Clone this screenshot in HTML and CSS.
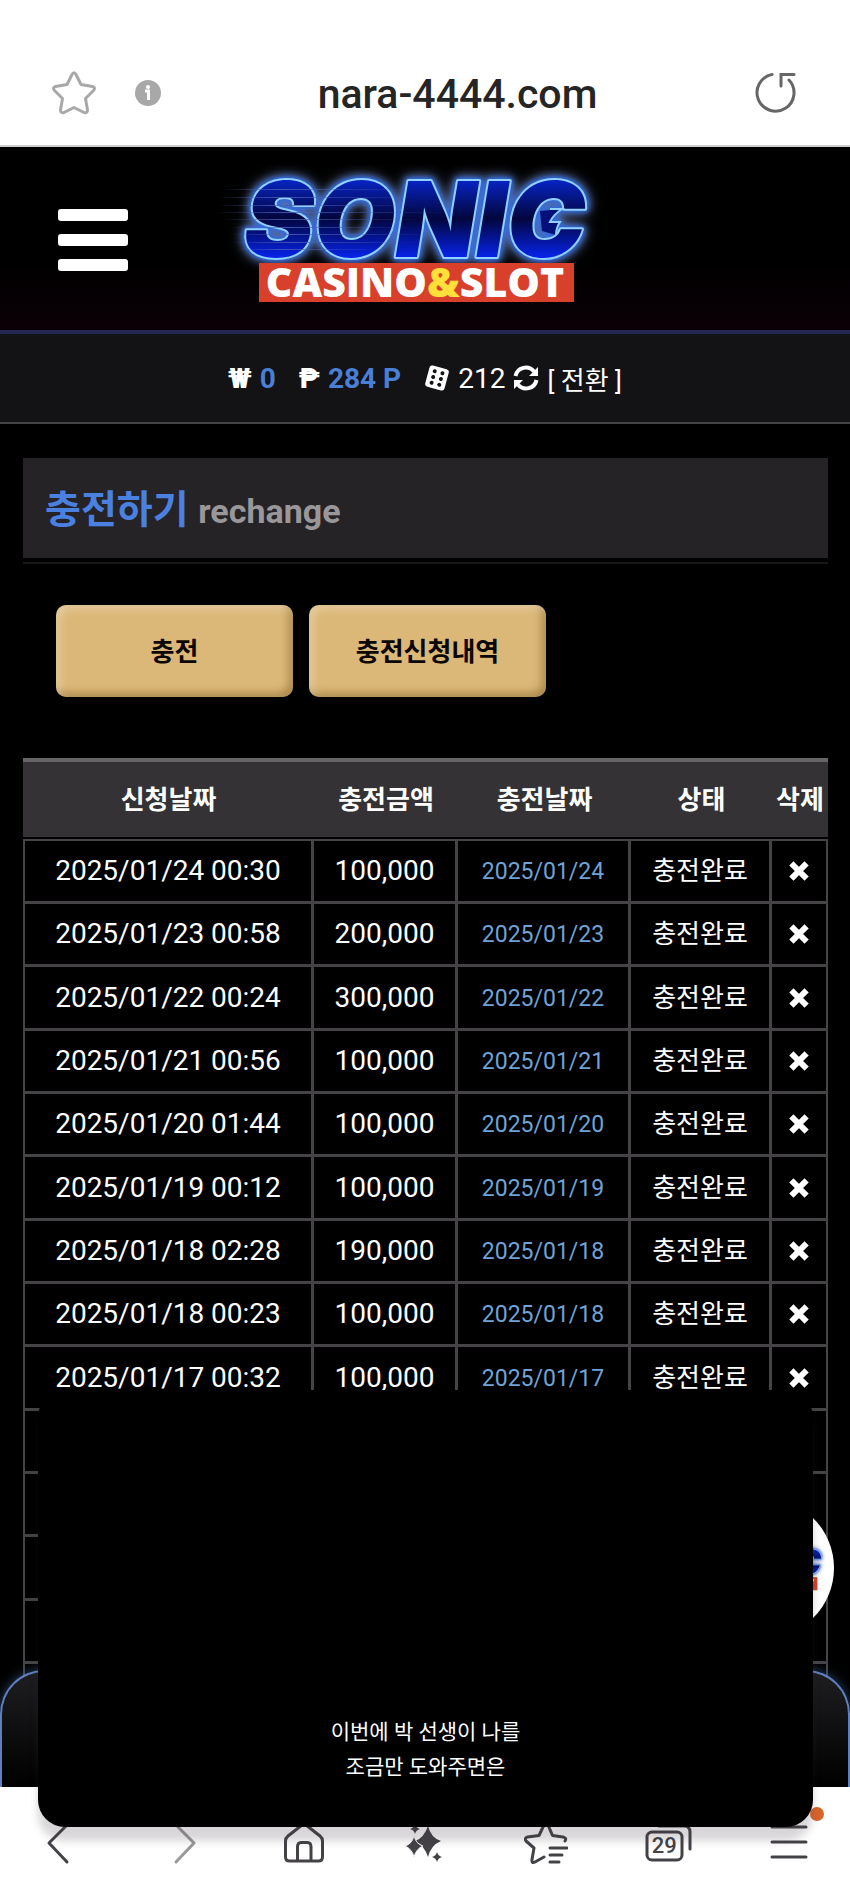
FILE: index.html
```html
<!DOCTYPE html>
<html lang="ko">
<head>
  <meta charset="UTF-8">
  <meta name="viewport" content="width=device-width, initial-scale=1.0">
  <title>충전하기</title>
  <link rel="stylesheet" href="styles.css">
</head>
<body>

  <!-- shared symbols -->
  <svg class="defs" width="0" height="0" aria-hidden="true">
    <defs>
      <linearGradient id="neon" x1="0" y1="0" x2="0" y2="1">
        <stop offset="0.1" stop-color="#0a2df0"/>
        <stop offset="0.5" stop-color="#02063c"/>
        <stop offset="0.8" stop-color="#0722e6"/>
      </linearGradient>
      <linearGradient id="speed" x1="0" y1="0" x2="1" y2="0">
        <stop offset="0" stop-color="#4a62b8" stop-opacity="0"/>
        <stop offset="0.3" stop-color="#4a62b8" stop-opacity="0.8"/>
        <stop offset="1" stop-color="#4a62b8" stop-opacity="0"/>
      </linearGradient>
    </defs>
    <symbol id="times" viewBox="0 0 20 20">
      <path d="M4.500 4.500 15.500 15.500M15.500 4.500 4.500 15.500" stroke="#fff" stroke-width="6" stroke-linecap="square" stroke-linejoin="round"/>
    </symbol>
  </svg>

  <div class="address-bar">
    <button class="icon-btn" aria-label="즐겨찾기">
      <svg width="48" height="48" viewBox="0 0 48 48" fill="none" stroke="#a8a8a8" stroke-width="3" stroke-linejoin="round">
        <path d="M22 5.500Q24 2 26 5.500L31 15.500 42.500 17.500Q46 18.500 43.500 21.500L35.500 29.500 37.500 41Q37.500 44.500 34 43.500L24 38.500 14 43.500Q10.500 44.500 10.500 41L12.500 29.500 4.500 21.500Q2 18.500 5.500 17.500L17 15.500Z"/>
      </svg>
    </button>
    <button class="icon-btn" aria-label="사이트 정보">
      <svg width="26" height="26" viewBox="0 0 26 26">
        <circle cx="13" cy="13" r="13" fill="#a8a8a8"/>
        <circle cx="13" cy="7" r="2" fill="#fff"/>
        <path d="M10 11H13.500V20" fill="none" stroke="#fff" stroke-width="3"/>
      </svg>
    </button>
    <span class="address">nara-4444.com</span>
    <button class="icon-btn" aria-label="새로고침">
      <svg width="44" height="44" viewBox="0 0 44 44" fill="none" stroke="#666" stroke-width="3" stroke-linecap="round">
        <path d="M18 3.500A18.500 18.500 0 1 0 35 9"/>
        <path d="M40 3.500H27V15"/>
      </svg>
    </button>
  </div>

  <div class="webview">
    <header class="site-header">
      <button class="menu" aria-label="메뉴"><span></span><span></span><span></span></button>
      <a href="#" class="logo" aria-label="SONIC CASINO&amp;SLOT">
        <svg width="430" height="145" viewBox="0 0 430 145">
          <g id="logo">
            <g class="logo-glow">
              <text class="logo-word" x="34" y="92">SONIC</text>
              <path d="M330 46 352 44Q343 50 340 57L350 57Q346 63 346 70L332 66Z" fill="#04107a"/>
              <path d="M340 44 352 44Q343 50 340 57L350 57Q346 63 346 70" fill="none" stroke="#8fd2ff" stroke-width="2"/>
            </g>
            <g fill="url(#speed)">
              <rect x="12" y="24" width="190" height="1"/>
              <rect x="8" y="32" width="200" height="1"/>
              <rect x="8" y="40" width="200" height="1"/>
              <rect x="6" y="47" width="230" height="1"/>
              <rect x="12" y="54" width="200" height="1"/>
              <rect x="22" y="62" width="180" height="1"/>
              <rect x="22" y="69" width="200" height="1"/>
              <rect x="22" y="77" width="190" height="1"/>
              <rect x="26" y="84" width="150" height="1"/>
            </g>
            <rect x="49" y="98" width="315" height="39" fill="#d8402b"/>
            <text class="logo-sub" x="205" y="132">CASINO<tspan class="logo-amp">&amp;</tspan>SLOT</text>
          </g>
        </svg>
      </a>
    </header>

    <div class="balance">
      <div class="balance-item"><i class="coin">₩</i><b>0</b></div>
      <div class="balance-item"><i class="coin">₱</i><b>284 P</b></div>
      <div class="balance-item">
        <svg width="26" height="26" viewBox="0 0 26 26">
          <g transform="rotate(15 13 13)">
            <rect x="3" y="2" width="20" height="22" rx="3" fill="#fff"/>
            <g fill="#131215">
              <circle cx="9" cy="7" r="2"/><circle cx="9" cy="13" r="2"/><circle cx="9" cy="19" r="2"/>
              <circle cx="17" cy="7" r="2"/><circle cx="17" cy="13" r="2"/><circle cx="17" cy="19" r="2"/>
            </g>
          </g>
        </svg>
        <span>212</span>
        <svg width="26" height="26" viewBox="0 0 26 26" fill="none" stroke="#fff" stroke-width="4">
          <path d="M2.500 11A10.500 10.500 0 0 1 21 6.500M23.500 15A10.500 10.500 0 0 1 5 19.500"/>
          <path d="M25 2V11H16ZM1 24V15H10Z" fill="#fff" stroke="none"/>
        </svg>
        <a href="#" class="convert">[ 전환 ]</a>
      </div>
    </div>

    <main class="content">
      <h1 class="page-title">충전하기 <small>rechange</small></h1>

      <div class="tabs">
        <button class="gold">충전</button>
        <button class="gold">충전신청내역</button>
      </div>

      <table class="history">
        <colgroup>
          <col>
          <col class="col-amount">
          <col class="col-date">
          <col class="col-state">
          <col class="col-del">
        </colgroup>
        <thead>
          <tr><th>신청날짜</th><th>충전금액</th><th>충전날짜</th><th>상태</th><th>삭제</th></tr>
        </thead>
        <tbody>
          <tr><td>2025/01/24 00:30</td><td>100,000</td><td class="date">2025/01/24</td><td class="state">충전완료</td><td><button class="del" aria-label="삭제"><svg width="20" height="20"><use href="#times"/></svg></button></td></tr>
          <tr><td>2025/01/23 00:58</td><td>200,000</td><td class="date">2025/01/23</td><td class="state">충전완료</td><td><button class="del" aria-label="삭제"><svg width="20" height="20"><use href="#times"/></svg></button></td></tr>
          <tr><td>2025/01/22 00:24</td><td>300,000</td><td class="date">2025/01/22</td><td class="state">충전완료</td><td><button class="del" aria-label="삭제"><svg width="20" height="20"><use href="#times"/></svg></button></td></tr>
          <tr><td>2025/01/21 00:56</td><td>100,000</td><td class="date">2025/01/21</td><td class="state">충전완료</td><td><button class="del" aria-label="삭제"><svg width="20" height="20"><use href="#times"/></svg></button></td></tr>
          <tr><td>2025/01/20 01:44</td><td>100,000</td><td class="date">2025/01/20</td><td class="state">충전완료</td><td><button class="del" aria-label="삭제"><svg width="20" height="20"><use href="#times"/></svg></button></td></tr>
          <tr><td>2025/01/19 00:12</td><td>100,000</td><td class="date">2025/01/19</td><td class="state">충전완료</td><td><button class="del" aria-label="삭제"><svg width="20" height="20"><use href="#times"/></svg></button></td></tr>
          <tr><td>2025/01/18 02:28</td><td>190,000</td><td class="date">2025/01/18</td><td class="state">충전완료</td><td><button class="del" aria-label="삭제"><svg width="20" height="20"><use href="#times"/></svg></button></td></tr>
          <tr><td>2025/01/18 00:23</td><td>100,000</td><td class="date">2025/01/18</td><td class="state">충전완료</td><td><button class="del" aria-label="삭제"><svg width="20" height="20"><use href="#times"/></svg></button></td></tr>
          <tr><td>2025/01/17 00:32</td><td>100,000</td><td class="date">2025/01/17</td><td class="state">충전완료</td><td><button class="del" aria-label="삭제"><svg width="20" height="20"><use href="#times"/></svg></button></td></tr>
          <tr><td></td><td></td><td></td><td></td><td></td></tr>
          <tr><td></td><td></td><td></td><td></td><td></td></tr>
          <tr><td></td><td></td><td></td><td></td><td></td></tr>
          <tr><td></td><td></td><td></td><td></td><td></td></tr>
          <tr><td></td><td></td><td></td><td></td><td></td></tr>
        </tbody>
      </table>
    </main>

    <a href="#" class="badge" aria-label="SONIC"><svg width="146" height="49" viewBox="0 0 430 145"><use href="#logo"/></svg></a>
    <div class="dock"></div>
  </div>

  <nav class="toolbar">
    <button aria-label="뒤로">
      <svg width="44" height="44" viewBox="0 0 44 44"><path d="M28 4 10 22 28 41"/></svg>
    </button>
    <button class="off" aria-label="앞으로">
      <svg width="44" height="44" viewBox="0 0 44 44"><path d="M16 4 34 22 16 41"/></svg>
    </button>
    <button aria-label="홈">
      <svg width="44" height="44" viewBox="0 0 44 44"><path d="M3.500 20Q3.500 17 6 15L20 4Q22 2.500 24 4L38 15Q40.500 17 40.500 20V36Q40.500 40 36.500 40H7.500Q3.500 40 3.500 36ZM15.500 40V26Q15.500 21.500 19 21.500H25.500Q29 21.500 29 26V40"/></svg>
    </button>
    <button aria-label="AI">
      <svg width="44" height="44" viewBox="0 0 44 44">
        <g fill="#444246" stroke="none">
          <path d="M25 5Q28 17 38 20Q28 24 25 36Q21 24 12 20Q21 17 25 5Z"/>
          <path d="M11 15Q13 23 20 25Q13 28 11 36Q9 28 2 25Q9 23 11 15Z" stroke="#f5f4f5" stroke-width="1"/>
          <path d="M12 2Q13 7 17 8Q13 9 12 13Q11 9 7 8Q11 7 12 2Z"/>
          <path d="M34 31Q35 35 39 36Q35 37 34 41Q33 37 29 36Q33 35 34 31Z"/>
        </g>
      </svg>
    </button>
    <button aria-label="북마크">
      <svg width="44" height="44" viewBox="0 0 44 44"><path d="M20 36 11 41Q7.500 43 8 38.500L10 27 2 20Q0 17 3.500 16L15 14.500 20 4Q22 1 24 4L28.500 14.500 39 16Q43 17 41 20M26 27H43M26 34H38M26 41H35"/></svg>
    </button>
    <button aria-label="탭 29개">
      <svg width="48" height="44" viewBox="0 0 48 44"><path d="M15 5H40Q46 5 46 11V28"/><rect x="3" y="11" width="35" height="28" rx="5"/></svg>
      <span class="tab-count">29</span>
    </button>
    <button aria-label="더보기">
      <svg width="44" height="44" viewBox="0 0 44 44"><path d="M5 6H39M5 21H39M5 36H39"/></svg>
      <span class="dot"></span>
    </button>
  </nav>

  <div class="popup">
    <p>이번에 박 선생이 나를<br>조금만 도와주면은</p>
  </div>

</body>
</html>
```
FILE: styles.css
```css
* {
  box-sizing: border-box;
}

body {
  margin: 0;
  height: 100vh;
  display: flex;
  flex-direction: column;
  position: relative;
  overflow: hidden;
  background: #000;
  color: #fff;
  font-family: Roboto, "Noto Sans CJK KR", sans-serif;
}

button {
  padding: 0;
  border: 0;
  background: none;
  color: inherit;
  font-family: inherit;
}

a {
  color: inherit;
  text-decoration: none;
}

svg {
  display: block;
}

.defs {
  position: absolute;
}

/* browser address bar */
.address-bar {
  flex: none;
  height: 147px;
  padding: 40px 52px 0 50px;
  display: flex;
  align-items: center;
  background: #fff;
  border-bottom: 2px solid #d0d0d0;
}

.address-bar .icon-btn + .icon-btn {
  margin-left: 37px;
}

.address {
  flex: 1;
  padding-top: 2px;
  color: #252525;
  font-size: 41px;
  font-weight: 500;
  text-align: center;
}

.webview {
  flex: 1;
  min-height: 0;
  position: relative;
  overflow: hidden;
}

/* header */
.site-header {
  height: 187px;
  padding: 18px 58px 0;
  display: grid;
  grid-template-columns: 1fr auto 1fr;
  align-items: start;
  background: linear-gradient(#000 60%, #0a0006);
  border-bottom: 4px solid #242756;
}

.menu {
  width: 70px;
  margin-top: 44px;
  display: flex;
  flex-direction: column;
  gap: 13px;
}

.menu span {
  width: 100%;
  height: 12px;
  border-radius: 3px;
  background: #fff;
}

.logo-glow {
  filter: drop-shadow(0 0 2px #2d66e0) drop-shadow(0 0 3px #2d66e0) drop-shadow(0 0 6px #6f86b8);
}

.logo-word {
  font: italic 900 105px Inter, sans-serif;
  fill: url(#neon);
  stroke: #8fd2ff;
  stroke-width: 4;
  stroke-linejoin: round;
  paint-order: stroke;
}

.logo-sub {
  fill: #fff;
  font: 800 41px "Open Sans", sans-serif;
  text-anchor: middle;
}

.logo-amp {
  fill: #ffe03a;
}

/* balance */
.balance {
  height: 90px;
  display: flex;
  justify-content: center;
  align-items: center;
  gap: 23px;
  background: #131215;
  border-bottom: 2px solid #444;
  font-size: 28px;
}

.balance-item {
  display: flex;
  align-items: center;
  gap: 8px;
}

.balance b {
  color: #4a7fd6;
}

.coin {
  font-style: normal;
  font-weight: 900;
}

.convert {
  font-size: 26px;
}

/* content */
.content {
  padding: 34px 22px 0 23px;
}

.page-title {
  height: 100px;
  margin: 0;
  padding-left: 22px;
  background: #252326;
  box-shadow: 0 4px #000, 0 6px #18171a;
  color: #4a80e0;
  font-size: 39px;
  line-height: 104px;
}

.page-title small {
  color: #99979a;
  font-size: 34px;
}

.tabs {
  display: flex;
  gap: 16px;
  padding: 47px 33px 61px;
}

.gold {
  width: 237px;
  height: 92px;
  padding-bottom: 4px;
  border-radius: 10px;
  background: #dcb878;
  box-shadow: inset 4px 4px 8px rgba(255, 255, 255, 0.3), inset -4px -4px 8px rgba(90, 60, 0, 0.4);
  color: #0b0704;
  font-size: 26px;
  font-weight: 700;
}

.history {
  width: 100%;
  table-layout: fixed;
  border-collapse: separate;
  border-spacing: 0;
  text-align: center;
}

.col-amount { width: 144px; }
.col-date { width: 173px; }
.col-state { width: 141px; }
.col-del { width: 56px; }

.history th {
  height: 81px;
  padding: 0;
  background: #353235;
  border-top: 4px solid #676568;
  border-bottom: 2px solid #000;
  font-size: 26px;
  font-weight: 700;
  line-height: 30px;
}

.history td {
  height: 63px;
  padding: 0;
  border: solid #454346;
  border-width: 0 3px 3px 0;
  font-size: 28px;
  line-height: 30px;
}

.history tbody tr:nth-child(3n) td {
  height: 64px;
}

.history tbody tr:first-child td {
  height: 65px;
  border-top-width: 2px;
}

.history td:first-child {
  border-left-width: 2px;
}

.history td:last-child {
  border-right-width: 2px;
}

.history .date {
  padding-top: 2px;
  color: #6fa3d8;
  font-size: 23px;
}

.history .state {
  font-size: 26px;
}

.del {
  display: block;
  margin: 0 auto;
}

/* floating parts of the site */
.badge {
  position: absolute;
  right: 16px;
  bottom: 149px;
  width: 140px;
  height: 140px;
  display: flex;
  align-items: center;
  border-radius: 50%;
  background: #fff;
  overflow: hidden;
}

.badge svg {
  flex: none;
}

.dock {
  position: absolute;
  left: 0;
  right: 0;
  bottom: 0;
  height: 117px;
  border: 2px solid #5f80c0;
  border-bottom: 0;
  border-radius: 44px 44px 0 0;
  background: linear-gradient(#1e1d20, #000);
  box-shadow: 0 0 12px rgba(80, 130, 200, 0.5);
}

/* browser toolbar */
.toolbar {
  flex: none;
  height: 111px;
  display: flex;
  background: #fff;
}

.toolbar button {
  flex: 1;
  display: flex;
  justify-content: center;
  align-items: center;
  position: relative;
}

.toolbar svg {
  fill: none;
  stroke: #444246;
  stroke-width: 3;
  stroke-linecap: round;
  stroke-linejoin: round;
}

.toolbar .off svg {
  stroke: #9a989b;
}

.tab-count {
  position: absolute;
  inset: 7px 7px 0 0;
  color: #444246;
  font-size: 22px;
  font-weight: 500;
  line-height: 104px;
  text-align: center;
}

.dot {
  position: absolute;
  top: 20px;
  right: 26px;
  width: 14px;
  height: 14px;
  border-radius: 50%;
  background: #d9642c;
}

.popup {
  position: absolute;
  left: 38px;
  right: 37px;
  bottom: 71px;
  height: 437px;
  padding-bottom: 42px;
  display: flex;
  justify-content: center;
  align-items: flex-end;
  border-radius: 27px;
  background: #000;
  box-shadow: 0 14px 8px rgba(60, 50, 60, 0.2);
}

.popup p {
  margin: 0;
  font-size: 21px;
  line-height: 35px;
  text-align: center;
}
```
